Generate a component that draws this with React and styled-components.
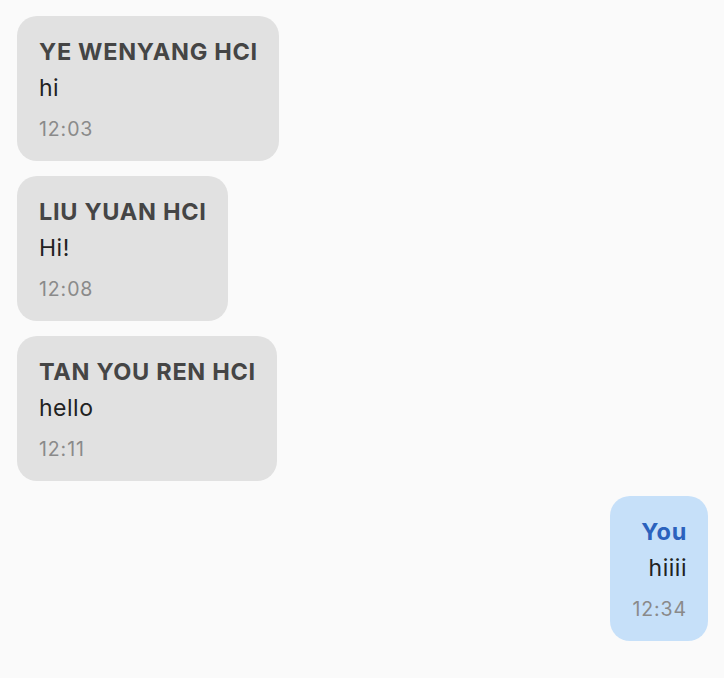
import React from "react";
import styled, { createGlobalStyle } from "styled-components";

const Global = createGlobalStyle`
  html, body { margin: 0; padding: 0; background: #fafafa; }
  body { font-family: Inter, "Noto Sans", sans-serif; }
`;

const Chat = styled.div`
  display: flex;
  flex-direction: column;
  gap: 15px;
  padding: 16px 16px 16px 17px;
`;

const Row = styled.div`
  display: flex;
  justify-content: ${(p) => (p.$mine ? "flex-end" : "flex-start")};
`;

const Bubble = styled.div`
  display: flex;
  flex-direction: column;
  align-items: ${(p) => (p.$mine ? "flex-end" : "flex-start")};
  box-sizing: border-box;
  height: 145px;
  padding: 19px 21px 0 22px;
  border-radius: 20px;
  background: ${(p) => (p.$mine ? "#c6e0f9" : "#e1e1e1")};
`;

const Name = styled.div`
  font-size: 23.5px;
  font-weight: 700;
  line-height: 34px;
  letter-spacing: 0.7px;
  color: ${(p) => (p.$mine ? "#2b62bd" : "#454545")};
`;

const Text = styled.div`
  font-size: 23px;
  line-height: 38px;
  letter-spacing: 0.5px;
  color: #222;
`;

const Time = styled.div`
  margin-top: 4px;
  font-size: 19.5px;
  line-height: 36px;
  letter-spacing: 0.9px;
  color: #8a8a8a;
`;

const messages = [
  { name: "YE WENYANG HCI", text: "hi", time: "12:03" },
  { name: "LIU YUAN HCI", text: "Hi!", time: "12:08" },
  { name: "TAN YOU REN HCI", text: "hello", time: "12:11" },
  { name: "You", text: "hiiii", time: "12:34", mine: true },
];

export default function App() {
  return (
    <>
      <Global />
      <Chat>
        {messages.map((m, i) => (
          <Row key={i} $mine={m.mine}>
            <Bubble $mine={m.mine}>
              <Name $mine={m.mine}>{m.name}</Name>
              <Text>{m.text}</Text>
              <Time>{m.time}</Time>
            </Bubble>
          </Row>
        ))}
      </Chat>
    </>
  );
}
